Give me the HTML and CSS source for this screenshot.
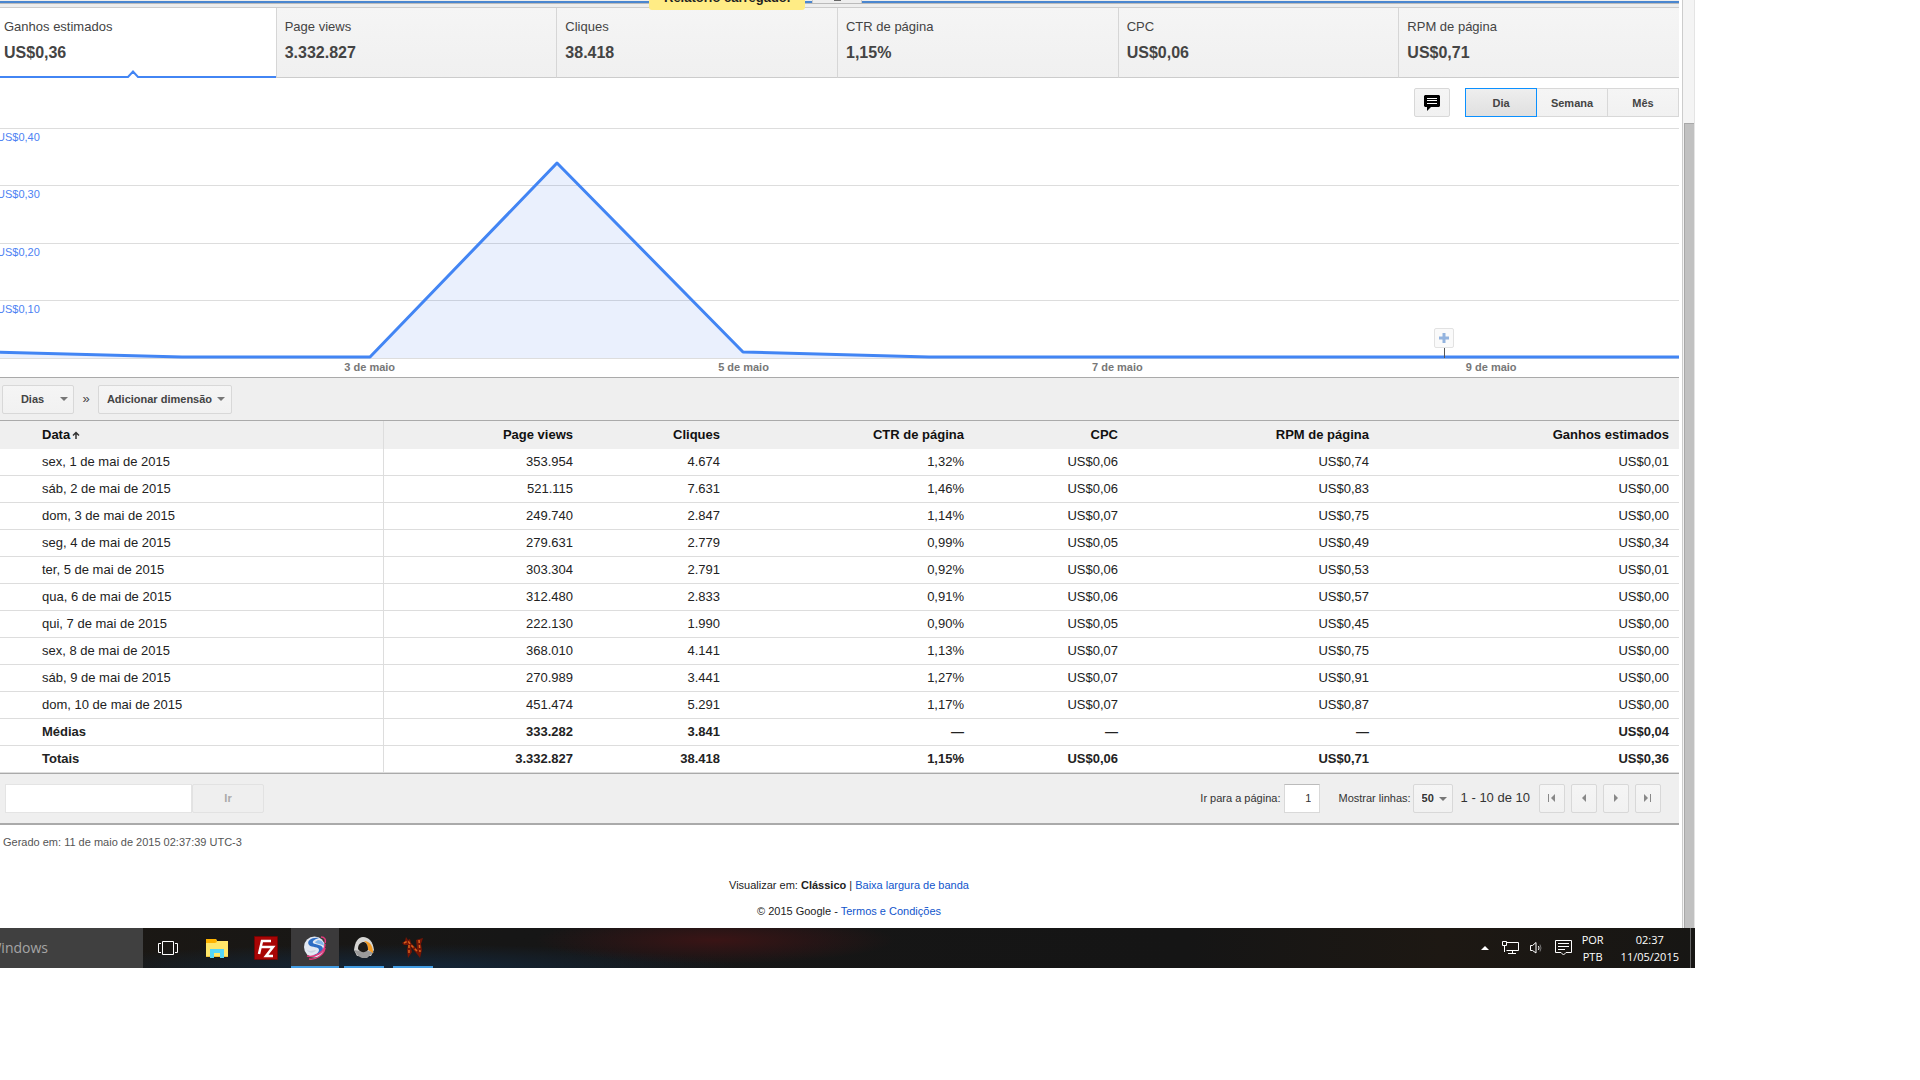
FILE: index.html
```html
<!DOCTYPE html>
<html lang="pt-BR">
<head>
<meta charset="utf-8">
<title>Relatórios de desempenho</title>
<link rel="stylesheet" href="styles.css">
</head>
<body>
<div class="screen">
  <div class="window">
    <main class="report">
      <div class="topbar">
        <div class="toast" role="status">Relatório carregado.</div>
        <button class="drawer-tab" aria-label="Expandir"><span class="drawer-arrow"></span></button>
      </div>

      <div class="cards">
        <button class="card card-active">
          <span class="card-label">Ganhos estimados</span><span class="card-value">US$0,36</span>
          <svg class="card-notch" width="14" height="8" viewBox="0 0 14 8"><path d="M0 8V6L2 6 7 0 12 6H14V8Z" fill="#fff"/><path d="M0 7H2L7 1.500 12 7H14" fill="none" stroke="#4285f4" stroke-width="2"/></svg>
        </button>
        <button class="card"><span class="card-label">Page views</span><span class="card-value">3.332.827</span></button>
        <button class="card"><span class="card-label">Cliques</span><span class="card-value">38.418</span></button>
        <button class="card"><span class="card-label">CTR de página</span><span class="card-value">1,15%</span></button>
        <button class="card"><span class="card-label">CPC</span><span class="card-value">US$0,06</span></button>
        <button class="card"><span class="card-label">RPM de página</span><span class="card-value">US$0,71</span></button>
      </div>

      <div class="chart-tools">
        <button class="btn btn-note" aria-label="Anotações">
          <svg width="16" height="16" viewBox="0 0 16 16"><path d="M1 0H15L16 1V11L15 12H7L3 16V12H1L0 11V1Z" fill="#000"/><path d="M3 3.500H13M3 5.500H13M3 8.500H13" stroke="#fff"/></svg>
        </button>
        <div class="segmented">
          <button class="btn btn-on">Dia</button><button class="btn">Semana</button><button class="btn">Mês</button>
        </div>
      </div>

      <div class="chart">
        <div class="grid-line"><span>US$0,40</span></div>
        <div class="grid-line"><span>US$0,30</span></div>
        <div class="grid-line"><span>US$0,20</span></div>
        <div class="grid-line"><span>US$0,10</span></div>
        <svg class="plot" viewBox="0 0 1684 232" preserveAspectRatio="none">
          <path d="M0 224 187 229H375L562 35 748 224 934 229H1684V230H0Z" fill="#4477f0" fill-opacity=".11"/>
          <path d="M0 224 187 229H375L562 35 748 224 934 229H1684" fill="none" stroke="#4285f4" stroke-width="3" stroke-linejoin="round" vector-effect="non-scaling-stroke"/>
        </svg>
        <button class="marker" style="left:86%" aria-label="Adicionar anotação"><svg width="10" height="10" viewBox="0 0 10 10"><path d="M3.500 0H6.500V3.500H10V6.500H6.500V10H3.500V6.500H0V3.500H3.500Z" fill="#93b3de"/></svg></button>
      </div>
      <div class="axis">
        <span style="left:22.25%">3 de maio</span>
        <span style="left:44.45%">5 de maio</span>
        <span style="left:66.65%">7 de maio</span>
        <span style="left:88.85%">9 de maio</span>
      </div>

      <div class="dimensions">
        <button class="btn btn-days">Dias<i class="caret"></i></button>
        <span class="raquo">»</span>
        <button class="btn btn-add">Adicionar dimensão<i class="caret"></i></button>
      </div>

      <table class="data">
        <colgroup><col class="c-date"><col class="c-views"><col class="c-clicks"><col class="c-ctr"><col class="c-cpc"><col class="c-rpm"><col class="c-earn"></colgroup>
        <thead>
          <tr><th>Data <svg width="8" height="8" viewBox="0 0 8 8"><path d="M4 8V1.500M1 4.500 4 1.500 7 4.500" fill="none" stroke="#333" stroke-width="1.500"/></svg></th><th>Page views</th><th>Cliques</th><th>CTR de página</th><th>CPC</th><th>RPM de página</th><th>Ganhos estimados</th></tr>
        </thead>
        <tbody>
          <tr><td>sex, 1 de mai de 2015</td><td>353.954</td><td>4.674</td><td>1,32%</td><td>US$0,06</td><td>US$0,74</td><td>US$0,01</td></tr>
          <tr><td>sáb, 2 de mai de 2015</td><td>521.115</td><td>7.631</td><td>1,46%</td><td>US$0,06</td><td>US$0,83</td><td>US$0,00</td></tr>
          <tr><td>dom, 3 de mai de 2015</td><td>249.740</td><td>2.847</td><td>1,14%</td><td>US$0,07</td><td>US$0,75</td><td>US$0,00</td></tr>
          <tr><td>seg, 4 de mai de 2015</td><td>279.631</td><td>2.779</td><td>0,99%</td><td>US$0,05</td><td>US$0,49</td><td>US$0,34</td></tr>
          <tr><td>ter, 5 de mai de 2015</td><td>303.304</td><td>2.791</td><td>0,92%</td><td>US$0,06</td><td>US$0,53</td><td>US$0,01</td></tr>
          <tr><td>qua, 6 de mai de 2015</td><td>312.480</td><td>2.833</td><td>0,91%</td><td>US$0,06</td><td>US$0,57</td><td>US$0,00</td></tr>
          <tr><td>qui, 7 de mai de 2015</td><td>222.130</td><td>1.990</td><td>0,90%</td><td>US$0,05</td><td>US$0,45</td><td>US$0,00</td></tr>
          <tr><td>sex, 8 de mai de 2015</td><td>368.010</td><td>4.141</td><td>1,13%</td><td>US$0,07</td><td>US$0,75</td><td>US$0,00</td></tr>
          <tr><td>sáb, 9 de mai de 2015</td><td>270.989</td><td>3.441</td><td>1,27%</td><td>US$0,07</td><td>US$0,91</td><td>US$0,00</td></tr>
          <tr><td>dom, 10 de mai de 2015</td><td>451.474</td><td>5.291</td><td>1,17%</td><td>US$0,07</td><td>US$0,87</td><td>US$0,00</td></tr>
        </tbody>
        <tfoot>
          <tr><td>Médias</td><td>333.282</td><td>3.841</td><td>—</td><td>—</td><td>—</td><td>US$0,04</td></tr>
          <tr><td>Totais</td><td>3.332.827</td><td>38.418</td><td>1,15%</td><td>US$0,06</td><td>US$0,71</td><td>US$0,36</td></tr>
        </tfoot>
      </table>

      <div class="pager">
        <form class="filter">
          <input class="filter-text" type="text" aria-label="Filtrar"><button class="btn btn-go" type="button" disabled>Ir</button>
        </form>
        <label for="page">Ir para a página:</label>
        <input class="page-no" id="page" type="text" value="1">
        <label for="rows">Mostrar linhas:</label>
        <span class="rows-wrap"><select class="btn rows" id="rows"><option>50</option></select><i class="caret"></i></span>
        <span class="range">1 - 10 de 10</span>
        <div class="steps">
          <button class="btn" aria-label="Primeira"><svg width="8" height="8" viewBox="0 0 8 8"><path d="M0 0H1V8H0ZM7 0V8L3 4Z"/></svg></button>
          <button class="btn" aria-label="Anterior"><svg width="8" height="8" viewBox="0 0 8 8"><path d="M6 0V8L2 4Z"/></svg></button>
          <button class="btn" aria-label="Próxima"><svg width="8" height="8" viewBox="0 0 8 8"><path d="M2 0V8L6 4Z"/></svg></button>
          <button class="btn" aria-label="Última"><svg width="8" height="8" viewBox="0 0 8 8"><path d="M6 0H7V8H6ZM0 0V8L4 4Z"/></svg></button>
        </div>
      </div>

      <p class="generated">Gerado em: 11 de maio de 2015 02:37:39 UTC-3</p>
      <footer class="legal">
        <p>Visualizar em: <b>Clássico</b> | <a href="#">Baixa largura de banda</a></p>
        <p>© 2015 Google - <a href="#">Termos e Condições</a></p>
      </footer>
    </main>
    <div class="scrollbar"><div class="thumb"></div></div>
  </div>

  <nav class="taskbar">
    <button class="search">Windows</button>
    <div class="apps">
      <button class="app" aria-label="Visão de tarefas"><svg width="20" height="14" viewBox="0 0 20 14" fill="none" stroke="#fff"><path d="M4.500 .5H15.500V13.500H4.500ZM3 2.500H.5V11.500H3M17 2.500H19.500V11.500H17"/></svg></button>
      <button class="app" aria-label="Explorador de arquivos"><svg width="22" height="19" viewBox="0 0 22 19"><path d="M0 0H10L11 2H22V18H0Z" fill="#ffe76a"/><path d="M0 0H10L11 3 9 4H0Z" fill="#ffb300"/><path d="M0 17H22V18H0Z" fill="#f2c53d"/><path d="M4 10H18V19H14V14H8V19H4Z" fill="#55d6f7"/></svg></button>
      <button class="app" aria-label="FileZilla"><svg width="24" height="24" viewBox="0 0 24 24"><path d="M.5 .5H23.500V23.500H.5Z" fill="#a80505" stroke="#700" stroke-dasharray="2 1"/><path d="M5 18 8 5H17M7 11H13M12 11H19L12 20H19" fill="none" stroke="#fff" stroke-width="2.500"/></svg></button>
      <button class="app app-open app-front" aria-label="Navegador"><svg width="24" height="24" viewBox="0 0 24 24"><circle cx="11.500" cy="11" r="10.500" fill="#e2e8f2"/><path d="M16 2C9 1 3 5 6 9 9 12 16 10 16 14 16 17 12 19 9 19 15 20 20 17 20 13 20 8 12 9 10 7 9 5 12 3 16 2Z" fill="#2d6dc4"/><path d="M15 4C19 4 21 7 21 10 17 7 12 8 12 6Z" fill="#7fb4ea"/><path d="M3 12C4 16 9 15 13 14 11 18 5 18 3 12Z" fill="#c9d3e4"/><path d="M18 1C22 1 23 4 22 7M22 8C22 16 12 22 4 20M22 12C21 19 13 24 6 23" fill="none" stroke="#e23b7c" stroke-width="1.500"/></svg></button>
      <button class="app app-open" aria-label="Aplicativo"><svg width="22" height="22" viewBox="0 0 22 22"><path d="M10 0C5 0 2 5 1 13L4 19H18L21 13C20 5 16 0 10 0Z" fill="#d5d5d3"/><path d="M1 13 5 19 9 21H14L21 15 15 14H7Z" fill="#9a9a9a"/><path d="M11 4C17 4 20 9 20 16L15 13C15 9 14 6 11 4Z" fill="#f39a22"/><path d="M5 12C5 7 8 5 11 5 14 6 15 9 15 13 12 16 8 16 5 12Z" fill="#1d1b18"/></svg></button>
      <button class="app app-open" aria-label="Jogo"><svg width="22" height="22" viewBox="0 0 22 22"><path d="M0 6 3 4 4 0 6 3 8 2 9 6 15 12 14 3 21 1 19 7 20 13 18 21 15 17 9 10 10 15 6 21 5 13 6 8 2 8Z" fill="#751505"/><path d="M2 6 6 4 8 7 16 15M17 3 18 15M7 8 7 16" fill="none" stroke="#d8601c" stroke-width="1.500" stroke-dasharray="3 2"/></svg></button>
    </div>
    <div class="tray">
      <svg width="8" height="4" viewBox="0 0 8 4"><path d="M4 0 8 4H0Z" fill="#fff"/></svg>
      <svg width="17" height="14" viewBox="0 0 17 14" fill="none" stroke="#fff"><path d="M5 1.500H16.500V9.500H4.500M10.500 10V13M6 12.500H14M.5 .5H4.500V4.500H.5ZM2.500 5V11"/></svg>
      <svg width="12" height="14" viewBox="0 0 12 14" fill="none" stroke="#fff"><path d="M.5 4.500H2.500L6 1.500V12L2.500 9.500H.5ZM8.500 5Q9.500 7 8.500 9"/><path d="M10 3.500Q12 7 10 10.500" stroke="#777"/></svg>
      <svg width="17" height="16" viewBox="0 0 17 16" fill="none" stroke="#fff"><path d="M.5 .5H16.500V12.500H11L8.500 15 6 12.500H.5ZM3 3.500H14M3 6.500H14M3 9.500H10"/></svg>
      <div class="tray-text"><span>POR</span><span>PTB</span></div>
      <div class="tray-text clock"><span>02:37</span><span>11/05/2015</span></div>
    </div>
  </nav>
</div>
</body>
</html>
```
FILE: styles.css
```css
* { box-sizing: border-box; }
body {
  margin: 0;
  background: #fff;
  color: #222;
  font: 13px/16px "Liberation Sans", Arial, sans-serif;
}
button, input, select { font: inherit; color: inherit; margin: 0; }
p { margin: 0; }
a { color: #15c; text-decoration: none; }
svg { display: block; }

.screen { margin-right: 225px; overflow: hidden; }
.window { display: flex; }
.report { flex: 1; min-width: 0; margin-left: -5px; }

/* page scrollbar */
.scrollbar { width: 13px; margin-left: 3px; padding-top: 123px; border-left: 1px solid #ccc; border-right: 1px solid #e4e4e4; background: #f4f4f4; display: flex; }
.thumb { flex: 1; margin-left: 1px; background: #c1c1c1; border-left: 1px solid #a8a8a8; border-top: 1px solid #a8a8a8; }

/* top strip */
.topbar { position: relative; height: 8px; padding-top: 1px; background: #eee; border-bottom: 1px solid #ccc; }
.topbar::before { content: ""; display: block; height: 2px; background: #4a86cf; border-bottom: 1px solid #bbb; }
.toast { position: absolute; z-index: 1; left: 654px; top: -14px; padding: 4px 15px; border-radius: 3px; background: #ffec85; font-weight: bold; white-space: nowrap; }
.drawer-tab { position: absolute; left: 817px; top: 0; width: 50px; height: 3px; padding: 0; border: solid #ccc; border-width: 0 1px; background: #eee; }
.drawer-arrow { display: block; width: 7px; height: 1px; margin: -2px auto 0; background: #666; }

/* metric cards */
.cards { display: grid; grid-template-columns: repeat(6, 1fr); }
.card { position: relative; display: flex; flex-direction: column; gap: 10px; height: 70px; padding: 11px 8px 0; border: 0; border-left: 1px solid #d6d6d6; border-bottom: 1px solid #ccc; background: linear-gradient(#f5f5f5, #f0f0f0); color: #444; text-align: left; }
.card-value { font-size: 16px; font-weight: bold; }
.card-active { border-left-color: #fff; border-bottom: 2px solid #4285f4; background: #fff; }
.card-notch { position: absolute; left: 50%; bottom: -2px; margin-left: -10px; }

/* buttons */
.btn { display: flex; align-items: center; justify-content: center; height: 29px; padding: 0; border: 1px solid #d8d8d8; border-radius: 2px; background: linear-gradient(#f5f5f5, #f1f1f1); color: #444; font-size: 11px; font-weight: bold; }
.caret { border: 4px solid transparent; border-top-color: #777; border-bottom: 0; }

.chart-tools { display: flex; justify-content: flex-end; gap: 15px; padding: 10px 0 11px; }
.btn-note { width: 36px; }
.segmented { display: flex; }
.segmented .btn { width: 72px; margin-left: -1px; border-radius: 0; }
.segmented .btn-on { position: relative; margin-left: 0; border-color: #0a90ff; background: linear-gradient(#eee, #e0e0e0); }

/* chart */
.chart { position: relative; display: grid; grid-template-rows: 57px 58px 57px 57px 1px; border-bottom: 1px solid #ddd; }
.grid-line { border-top: 1px solid #ddd; padding-left: 2px; color: #4d82f3; font-size: 11px; }
.plot { position: absolute; left: 0; top: 0; width: 100%; height: 232px; overflow: visible; }
.marker { position: absolute; top: 200px; display: grid; place-items: center; width: 20px; height: 20px; margin-left: -9px; padding: 0; border: 1px solid #e2e2e2; border-radius: 2px; background: #fafafa; }
.marker::after { content: ""; position: absolute; left: 9px; top: 19px; width: 1px; height: 10px; background: #555; }
.axis { position: relative; height: 18px; color: #777; font-size: 11px; font-weight: bold; }
.axis span { position: absolute; transform: translateX(-50%); white-space: nowrap; }

/* dimensions */
.dimensions { display: flex; align-items: center; height: 43px; padding: 0 7px; border-top: 1px solid #aaa; background: #efefef; }
.btn-days { width: 72px; gap: 16px; padding-left: 13px; }
.raquo { width: 24px; text-align: center; color: #444; }
.btn-add { width: 134px; gap: 5px; padding-left: 2px; }

/* table */
.data { width: 100%; border-top: 1px solid #aaa; border-collapse: separate; border-spacing: 0; table-layout: fixed; }
.c-date { width: 389px; }
.c-views { width: 199px; }
.c-clicks { width: 147px; }
.c-ctr { width: 244px; }
.c-cpc { width: 154px; }
.c-rpm { width: 251px; }
.data th, .data td { height: 27px; padding: 0 10px 1px; border-bottom: 1px solid #ddd; text-align: right; }
.data th { height: 28px; border-bottom: 0; background: #efefef; color: #111; }
.data th:first-child, .data td:first-child { padding-left: 47px; border-right: 1px solid #ddd; text-align: left; }
.data th svg { display: inline-block; margin-left: -2px; }
.data tfoot { font-weight: bold; }

/* pager */
.pager { display: flex; align-items: center; height: 52px; padding: 0 18px 1px 10px; border-top: 1px solid #aaa; border-bottom: 2px solid #aaa; background: #efefef; font-size: 11px; color: #333; }
.filter { display: flex; margin-right: auto; }
.filter-text { width: 187px; height: 29px; border: 1px solid #e4e4e4; background: #fff; }
.btn-go { width: 72px; background: #efefef; border-color: #e2e2e2; color: #aaa; }
.page-no { width: 36px; height: 29px; margin: 0 18px 0 4px; padding: 0 8px; border: 1px solid #d9d9d9; border-top-color: #bbb; background: #fff; text-align: right; }
.rows-wrap { position: relative; margin: 0 8px 0 2px; }
.rows { appearance: none; width: 40px; padding-left: 8px; text-align: left; color: #333; }
.rows-wrap .caret { position: absolute; right: 6px; top: 13px; pointer-events: none; }
.range { font-size: 13px; margin-right: 9px; }
.steps { display: flex; gap: 6px; }
.steps .btn { width: 26px; fill: #888; }

.generated { padding: 9px 8px 0; font-size: 11px; color: #555; }
.legal { display: flex; flex-direction: column; gap: 10px; padding: 27px 0 9px 24px; text-align: center; font-size: 11px; }

/* taskbar */
.taskbar {
  display: flex;
  height: 40px;
  background:
    radial-gradient(ellipse 180px 24px at 715px 12px, #3a1415, transparent),
    radial-gradient(ellipse 340px 24px at 400px 40px, #14273a, transparent),
    linear-gradient(90deg, #1c1813, #161616 30%, #151515 70%, #1d1813 85%, #171614);
  color: #fff;
  font-family: "Open Sans", "Noto Sans", sans-serif;
}
.search { display: flex; justify-content: flex-end; align-items: center; width: 143px; padding: 0 95px 0 0; border: 0; background: #404040; color: #a5a5a5; font-size: 14px; }
.apps { display: flex; gap: 1px; padding-left: 1px; }
.app { display: grid; place-items: center; position: relative; width: 48px; padding: 0; border: 0; background: none; }
.app-open::after { content: ""; position: absolute; left: 4px; right: 4px; bottom: 0; height: 2px; background: #429ce3; }
.app-front { background: #3b3a3b; }
.app-front::after { left: 0; right: 0; }
.tray { display: flex; align-items: center; gap: 12px; margin-left: auto; margin-right: 4px; padding-right: 11px; border-right: 1px solid #666; font-size: 11px; }
.tray-text { display: flex; flex-direction: column; gap: 1px; margin-left: -2px; text-align: center; }
.clock { margin-left: 5px; }
.tray svg + svg { margin-left: 1px; }
.tray svg:nth-child(3) { margin-left: -1px; }
```
